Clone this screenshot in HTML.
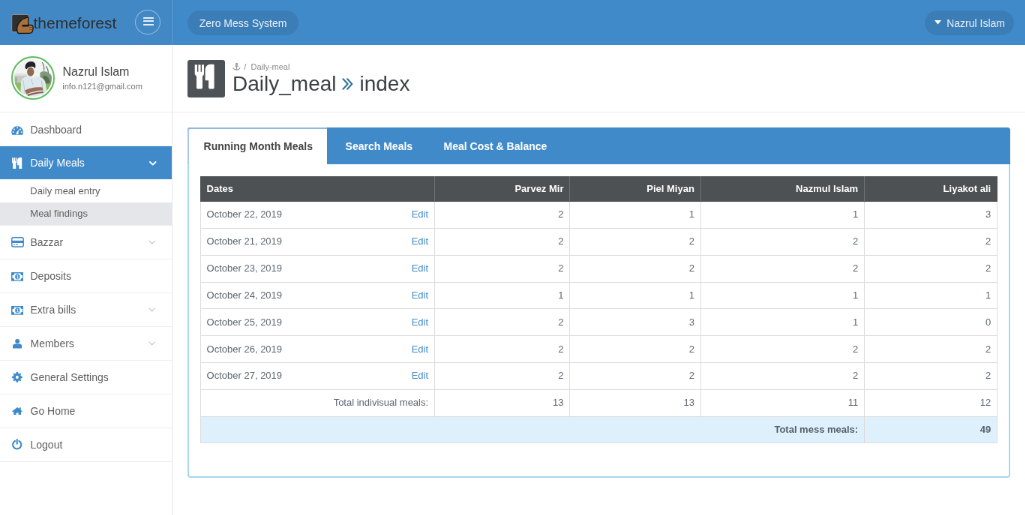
<!DOCTYPE html>
<html>
<head>
<meta charset="utf-8">
<style>
html,body{margin:0;padding:0;width:1025px;height:515px;overflow:hidden;background:#fff;}
*{box-sizing:border-box;}
#root{position:absolute;left:0;top:0;width:1366.67px;height:686.67px;transform:scale(0.75);transform-origin:0 0;will-change:transform;font-family:"Liberation Sans",sans-serif;color:#555;background:#fff;}
.abs{position:absolute;}
/* header */
#hdr{position:absolute;left:0;top:0;width:1366.67px;height:60px;background:#418aca;}
#logo{position:absolute;left:0;top:0;width:230px;height:60px;background:#4288c5;border-right:1.3px solid #5a9bd2;}
#logobox{position:absolute;left:15px;top:20px;width:24px;height:24px;background:#2a2a2a;border-radius:2px;border:1px solid #777;}
#logotext{position:absolute;left:44.5px;top:16.2px;font-size:21px;color:#2e2e2e;letter-spacing:0px;line-height:30px;}
#burger{position:absolute;left:180.3px;top:12.5px;width:34px;height:33px;border-radius:50%;border:1px solid rgba(255,255,255,0.45);}
#burger i{position:absolute;left:9.6px;width:14.5px;height:2.4px;background:#e6eef7;border-radius:0.5px;}
.pill{position:absolute;top:13.5px;height:33px;border-radius:17px;background:rgba(0,0,0,0.09);color:#e9f0f8;font-size:14px;line-height:33px;white-space:nowrap;}
/* sidebar */
#side{position:absolute;left:0;top:60px;width:230px;height:627px;border-right:1px solid #e6e6e6;}
#user{position:absolute;left:0;top:0;width:229px;height:90px;border-bottom:1px solid #ececec;}
#avatar{position:absolute;left:14.7px;top:14.7px;width:58.6px;height:58.6px;border-radius:50%;border:2px solid #5cbd5c;padding:2px;background:#fff;}
#avatar .ph{width:100%;height:100%;border-radius:50%;overflow:hidden;position:relative;background:#f4f6f6;}
#uname{position:absolute;left:83.5px;top:26px;font-size:16px;color:#444;line-height:20px;white-space:nowrap;}
#umail{position:absolute;left:83.3px;top:48px;font-size:11px;color:#727272;line-height:14px;white-space:nowrap;}
.mi{position:absolute;left:0;width:229px;height:45px;border-bottom:1px solid #eeeeee;font-size:14px;color:#5f5f5f;line-height:44px;}
.mi .t{position:absolute;left:40.5px;top:0;white-space:nowrap;}
.mi svg.ic{position:absolute;left:14.5px;top:14px;}
.mi .chev{position:absolute;left:198px;top:18px;}
.sub{position:absolute;left:0;width:229px;height:31px;font-size:13px;color:#5f5f5f;line-height:31px;}
.sub .t{position:absolute;left:40.3px;top:0;white-space:nowrap;}
/* content */
#ph{position:absolute;left:230px;top:60px;width:1136.67px;height:90px;border-bottom:1px solid #ececec;}
#phicon{position:absolute;left:20px;top:20px;width:50px;height:50px;background:#4d5256;border-radius:3px;}
#bc{position:absolute;left:80px;top:22px;font-size:11px;color:#888;white-space:nowrap;line-height:14px;}
#title2{position:absolute;left:249.5px;top:35px;font-size:28px;color:#3d4043;white-space:nowrap;line-height:34px;}
#title{position:absolute;left:80px;top:35px;font-size:28px;color:#3d4043;white-space:nowrap;line-height:34px;}
#title .rq{color:#2a7ab3;}
#box{position:absolute;left:249.6px;top:169.6px;width:1097.2px;height:467.4px;border:2px solid #a4d9ea;border-radius:4px;}
#tabbar{position:absolute;left:-2px;top:-2px;width:1097.2px;height:49.3px;background:#418aca;border-radius:4px 4px 0 0;border-top:1px solid #3b82c2;}
#tabact{position:absolute;left:0;top:-1px;width:186.4px;height:49.3px;background:#fff;border-radius:4px 0 0 0;border-top:2px solid #8fb6de;border-left:2px solid #a9c4e4;}
.tab{position:absolute;top:0px;font-size:14px;font-weight:bold;line-height:48px;white-space:nowrap;color:#fff;}
table{position:absolute;left:15px;top:63px;border-collapse:collapse;font-size:13px;color:#5b6670;}
td,th{border:1px solid #dcdcdc;padding:0 8px;height:35.9px;white-space:nowrap;}
td{padding-bottom:1.5px;}
th{background:#4d5154;color:#fff;font-weight:bold;height:33.3px;border-color:#4d5154;border-left-color:#6e7275;border-right-color:#6e7275;}
th:first-child{border-left-color:#4d5154;}
th:last-child{border-right-color:#4d5154;}
.r{text-align:right;}
a{color:#428bca;text-decoration:none;}
tr.tot td{background:#dff0fd;font-weight:bold;color:#56606a;border-color:#dcdcdc;height:35.3px;}
</style>
</head>
<body>
<div id="root">
  <div id="hdr">
    <div id="logo">
      <svg class="abs" style="left:15px;top:18px" width="32" height="28" viewBox="0 0 32 28">
        <rect x="0.7" y="1.4" width="22.4" height="23.2" rx="2" fill="#2f2f2f" stroke="#8e969c" stroke-width="1"/>
        <path transform="translate(0,0.8)" d="M21.8 4 C14 6 8 12 7.7 19.2 C7.6 22 8 24.5 9.5 25.7 L24.6 25.6 C27.5 25.4 29.2 22 29.2 18 C29.2 15.5 28 14.6 26.5 14.6 L15.5 14.8 C14.6 14.9 14.6 16 15.5 16.1 L22.8 16.1 L22.8 4.3 Z" fill="#a8713c" stroke="#161310" stroke-width="1.3" stroke-linejoin="round"/>
        <path d="M24 18.5 H28.6 M24 21.5 H28.4" stroke="#5a3d22" stroke-width="0.6"/>
      </svg>
      <div id="logotext">themeforest</div>
      <div id="burger"><i style="top:9.4px"></i><i style="top:13.6px"></i><i style="top:18.6px"></i></div>
    </div>
    <div class="pill" style="left:249.7px;width:148px;padding-left:16px;line-height:34px;">Zero Mess System</div>
    <div class="pill" style="left:1233px;width:119px;padding-left:29.2px;line-height:35.6px;">Nazrul Islam
      <svg class="abs" style="left:12.5px;top:13.7px" width="9" height="5.6" viewBox="0 0 10 6"><path d="M0 0H10L5 6Z" fill="#fff"/></svg>
    </div>
  </div>

  <div id="side">
    <div id="user">
      <div id="avatar"><div style="width:50.6px;height:50.6px;border-radius:50%;overflow:hidden"><svg width="50.6" height="50.6" viewBox="0 0 50 50" style="display:block">
                <g>
          <rect width="50" height="50" fill="#f1f3f3"/>
          <rect x="0" y="19" width="17" height="14" fill="#c6c9c2"/>
          <rect x="0" y="19" width="17" height="2.5" fill="#e2e4e0"/>
          <rect x="1" y="24" width="3" height="8" fill="#a9ada6"/>
          <path d="M34 18 C38 14 44 16 50 22 V36 H34 Z" fill="#7f9a7a"/>
          <path d="M38 22 C42 20 46 24 47 30 L45 34 H38 Z" fill="#55704f"/>
          <path d="M37 4 C39 8 40 11 39 15 M42 9 C44 12 45 15 45 19" stroke="#6a6a6a" stroke-width="1.1" fill="none"/>
          <rect x="0" y="31" width="12" height="19" fill="#8cbc5c"/>
          <rect x="36" y="32" width="14" height="18" fill="#86b85a"/>
          <path d="M8 50 L9 30 C10 25 14 23 18 22 L21 24 L26 24 L29 22 C34 23 39 25 41 30 L44 50 Z" fill="#dde8ee"/>
          <path d="M12 28 L14 45 M36 28 L38 44 M22 26 L25 34" stroke="#b8c6cf" stroke-width="1" fill="none"/>
          <path d="M14 41 C20 38 28 36 37 37 L38 41 C30 41 23 43 16 46 Z" fill="#9a6a52"/>
          <path d="M17 46.5 C23 44.5 30 43 38 42.5 L38.5 44.5 C31 45 24 46.5 18 48.5 Z" fill="#8a5c46"/>
          <ellipse cx="21.5" cy="16.5" rx="4.6" ry="6" fill="#8f684f"/>
          <path d="M14.5 12 C13.5 5 19 2.5 23 3 C27.5 3.5 29 7 27.5 12 L26.5 11 C24 9 19 9 16.5 13 Z" fill="#1f2029"/>
        </g></svg></div></div>
      <div id="uname">Nazrul Islam</div>
      <div id="umail">info.n121@gmail.com</div>
    </div>
    <div class="mi" style="top:90px;"><span class="t" style="top:1.3px">Dashboard</span></div>
    <div class="mi" style="top:135px;height:44px;border:0;background:#418aca;color:#fff;"><span class="t">Daily Meals</span></div>
    <div class="sub" style="top:179px;"><span class="t">Daily meal entry</span></div>
    <div class="sub" style="top:210px;background:#e4e6e9;"><span class="t" style="top:-1.3px">Meal findings</span></div>
    <div class="abs" style="left:0;top:240px;width:229px;height:1px;background:#eee"></div>
    <div class="mi" style="top:241px;"><span class="t">Bazzar</span></div>
    <div class="mi" style="top:286px;"><span class="t">Deposits</span></div>
    <div class="mi" style="top:331px;"><span class="t">Extra bills</span></div>
    <div class="mi" style="top:376px;"><span class="t">Members</span></div>
    <div class="mi" style="top:421px;"><span class="t">General Settings</span></div>
    <div class="mi" style="top:466px;"><span class="t">Go Home</span></div>
    <div class="mi" style="top:511px;"><span class="t">Logout</span></div>
  </div>
  <!-- sidebar icons (root coords) -->
  <svg class="abs" style="left:14.8px;top:168.3px" width="16.3" height="12" viewBox="0 0 16 12">
    <path d="M8 0.3 A7.8 7.8 0 0 0 0.2 8.1 C0.2 9.6 0.6 10.9 1.2 11.8 L14.8 11.8 C15.4 10.9 15.8 9.6 15.8 8.1 A7.8 7.8 0 0 0 8 0.3 Z" fill="#3d8acb"/>
    <g fill="#fff"><rect x="7.1" y="1.6" width="1.8" height="1.6"/><rect x="3.1" y="3.6" width="1.6" height="1.8"/><rect x="1.6" y="7.4" width="1.8" height="1.6"/><rect x="12.6" y="7.4" width="1.8" height="1.6"/><rect x="11.3" y="3.6" width="1.6" height="1.8"/>
    <path d="M11 3.6 L9.2 8.6 A1.6 1.6 0 1 1 7 8.4 Z"/></g>
  </svg>
  <svg class="abs" style="left:16.4px;top:209.5px" width="13.2" height="15.8" viewBox="9.7 5.7 25.9 32.9" preserveAspectRatio="none" fill="#fff">
      <path d="M9.7 6.3 H13 V15.7 H14.4 V6.3 H17.6 V15.7 H19 V6.3 H22 V18 C22 19.8 21 20.8 20 21.4 V36.8 C20 37.9 19.2 38.6 18 38.6 H14 C12.8 38.6 12 37.9 12 36.8 V21.4 C11 20.8 9.7 19.8 9.7 18 Z"/>
      <path d="M34.2 5.7 C35 5.7 35.6 6.3 35.6 7 V36.8 C35.6 37.9 34.8 38.6 33.6 38.6 H30.1 C28.9 38.6 28.1 37.9 28.1 36.8 V27.3 H23.6 V13 C23.6 9 26.5 5.7 30.5 5.7 Z"/>
  </svg>
  <svg class="abs" style="left:199px;top:214.5px" width="9.5" height="6" viewBox="0 0 9.5 6"><path d="M1 1 L4.75 4.6 L8.5 1" stroke="#fff" stroke-width="1.9" fill="none" stroke-linecap="round" stroke-linejoin="round"/></svg>
  <svg class="abs" style="left:14.5px;top:316px" width="17" height="13.7" viewBox="0 0 17 13.7">
    <rect x="0.8" y="0.8" width="15.4" height="12.1" rx="2" fill="none" stroke="#3d8acb" stroke-width="1.5"/>
    <rect x="1" y="4.8" width="15" height="3.2" fill="#3d8acb"/>
    <rect x="3" y="9.6" width="2" height="1" fill="#3d8acb"/><rect x="5.8" y="9.6" width="3.2" height="1" fill="#3d8acb"/>
  </svg>
  <svg class="abs" style="left:197.6px;top:320px" width="9.4" height="6.2" viewBox="0 0 9 6"><path d="M0.8 0.8 L4.5 4.8 L8.2 0.8" stroke="#c4c4c4" stroke-width="1.1" fill="none"/></svg>
  <svg class="abs" style="left:14.5px;top:363px" width="16.6" height="11.8" viewBox="0 0 16.6 11.8">
    <path fill="#3d8acb" fill-rule="evenodd" d="M0 0 H16.6 V11.8 H0 Z M4.2 1.4 H12.4 A2.7 2.7 0 0 0 15.1 4.1 V7.7 A2.7 2.7 0 0 0 12.4 10.4 H4.2 A2.7 2.7 0 0 0 1.5 7.7 V4.1 A2.7 2.7 0 0 0 4.2 1.4 Z"/>
    <ellipse cx="8.3" cy="5.9" rx="3.1" ry="3.6" fill="#3d8acb"/>
    <path d="M7.3 4.4 L8.6 3.9 V7.9 M7.2 7.9 H9.9" stroke="#fff" stroke-width="0.9" fill="none"/>
  </svg>
  <svg class="abs" style="left:14.5px;top:408px" width="16.6" height="11.8" viewBox="0 0 16.6 11.8">
    <path fill="#3d8acb" fill-rule="evenodd" d="M0 0 H16.6 V11.8 H0 Z M4.2 1.4 H12.4 A2.7 2.7 0 0 0 15.1 4.1 V7.7 A2.7 2.7 0 0 0 12.4 10.4 H4.2 A2.7 2.7 0 0 0 1.5 7.7 V4.1 A2.7 2.7 0 0 0 4.2 1.4 Z"/>
    <ellipse cx="8.3" cy="5.9" rx="3.1" ry="3.6" fill="#3d8acb"/>
    <path d="M7.3 4.4 L8.6 3.9 V7.9 M7.2 7.9 H9.9" stroke="#fff" stroke-width="0.9" fill="none"/>
  </svg>
  <svg class="abs" style="left:197.6px;top:410px" width="9.4" height="6.2" viewBox="0 0 9 6"><path d="M0.8 0.8 L4.5 4.8 L8.2 0.8" stroke="#c4c4c4" stroke-width="1.1" fill="none"/></svg>
  <svg class="abs" style="left:16.9px;top:452.3px" width="12.4" height="12.4" viewBox="0 0 12.4 12.4" fill="#3d8acb">
    <circle cx="6.2" cy="3" r="3"/>
    <path d="M0 12.4 V9.8 C0 7.8 1.6 6.6 3.6 6.6 H8.8 C10.8 6.6 12.4 7.8 12.4 9.8 V12.4 Z"/>
  </svg>
  <svg class="abs" style="left:197.6px;top:455px" width="9.4" height="6.2" viewBox="0 0 9 6"><path d="M0.8 0.8 L4.5 4.8 L8.2 0.8" stroke="#c4c4c4" stroke-width="1.1" fill="none"/></svg>
  <svg class="abs" style="left:15.8px;top:496px" width="13.8" height="13.8" viewBox="-7 -7 14 14" fill="#3d8acb">
    <path fill-rule="evenodd" d="M-1.2 -6.9 H1.2 L1.5 -5 L2.9 -4.4 L4.5 -5.6 L5.6 -4.5 L4.4 -2.9 L5 -1.5 L6.9 -1.2 V1.2 L5 1.5 L4.4 2.9 L5.6 4.5 L4.5 5.6 L2.9 4.4 L1.5 5 L1.2 6.9 H-1.2 L-1.5 5 L-2.9 4.4 L-4.5 5.6 L-5.6 4.5 L-4.4 2.9 L-5 1.5 L-6.9 1.2 V-1.2 L-5 -1.5 L-4.4 -2.9 L-5.6 -4.5 L-4.5 -5.6 L-2.9 -4.4 L-1.5 -5 Z M0 -2.2 A2 2.2 0 1 0 0 2.2 A2 2.2 0 1 0 0 -2.2 Z"/>
  </svg>
  <svg class="abs" style="left:15.9px;top:542.7px" width="14.2" height="10.8" viewBox="0 0 14.2 10.8" fill="#3d8acb">
    <path d="M7.1 0 L14.2 5.6 L13.3 6.6 L12 5.6 V10.8 H8.6 V7.6 H5.6 V10.8 H2.2 V5.6 L0.9 6.6 L0 5.6 Z"/>
    <rect x="9.6" y="0.4" width="2.2" height="3.2"/>
  </svg>
  <svg class="abs" style="left:16.3px;top:585.3px" width="13.4" height="14.3" viewBox="0 0 13.4 14.3">
    <path d="M4 3 A5.6 5.6 0 1 0 9.4 3" stroke="#3d8acb" stroke-width="2.1" fill="none" stroke-linecap="round"/>
    <path d="M6.7 1.1 V6.8" stroke="#3d8acb" stroke-width="2.1" stroke-linecap="round"/>
  </svg>

  <div id="ph">
    <div id="phicon"><svg width="50" height="50" viewBox="0 0 50 50" style="display:block" fill="#fff">
      <path d="M9.7 6.3 H13 V15.7 H14.4 V6.3 H17.6 V15.7 H19 V6.3 H22 V18 C22 19.8 21 20.8 20 21.4 V36.8 C20 37.9 19.2 38.6 18 38.6 H14 C12.8 38.6 12 37.9 12 36.8 V21.4 C11 20.8 9.7 19.8 9.7 18 Z"/>
      <path d="M34.2 5.7 C35 5.7 35.6 6.3 35.6 7 V36.8 C35.6 37.9 34.8 38.6 33.6 38.6 H30.1 C28.9 38.6 28.1 37.9 28.1 36.8 V27.3 H23.6 V13 C23.6 9 26.5 5.7 30.5 5.7 Z"/>
    </svg></div>
    <div id="bc">&nbsp;&nbsp;&nbsp;&nbsp; / &nbsp;Daily-meal</div>
    <svg class="abs" style="left:80.3px;top:24.3px" width="11" height="10" viewBox="0 0 11 10"><g stroke="#9a9a9a" stroke-width="1.3" fill="none"><circle cx="5.5" cy="1.5" r="1.1"/><path d="M5.5 2.6 V9 M3.2 4.2 H7.8 M1 6.2 C1.5 8.2 3.3 9.2 5.5 9.2 C7.7 9.2 9.5 8.2 10 6.2"/></g></svg>
    <div id="title">Daily_meal</div><div id="title2">index</div>
    <svg class="abs" style="left:226.4px;top:43.9px" width="16.2" height="16" viewBox="0 0 16 16"><path d="M1.4 1.3 L7.6 8 L1.4 14.7 M7 1.3 L13.2 8 L7 14.7" stroke="#2d709a" stroke-width="2.0" fill="none" stroke-linecap="round" stroke-linejoin="round"/></svg>
  </div>

  <div id="box">
    <div id="tabbar">
      <div id="tabact"></div>
      <div class="tab" style="left:22px;color:#444;">Running Month Meals</div>
      <div class="tab" style="left:211px;">Search Meals</div>
      <div class="tab" style="left:342px;">Meal Cost &amp; Balance</div>
    </div>
    <table>
      <colgroup><col style="width:312.5px"><col style="width:180.4px"><col style="width:174.4px"><col style="width:218.3px"><col style="width:177px"></colgroup>
      <tr><th style="text-align:left">Dates</th><th class="r">Parvez Mir</th><th class="r">Piel Miyan</th><th class="r">Nazmul Islam</th><th class="r">Liyakot ali</th></tr>
      <tr><td>October 22, 2019<a style="float:right">Edit</a></td><td class="r">2</td><td class="r">1</td><td class="r">1</td><td class="r">3</td></tr>
      <tr><td>October 21, 2019<a style="float:right">Edit</a></td><td class="r">2</td><td class="r">2</td><td class="r">2</td><td class="r">2</td></tr>
      <tr><td>October 23, 2019<a style="float:right">Edit</a></td><td class="r">2</td><td class="r">2</td><td class="r">2</td><td class="r">2</td></tr>
      <tr><td>October 24, 2019<a style="float:right">Edit</a></td><td class="r">1</td><td class="r">1</td><td class="r">1</td><td class="r">1</td></tr>
      <tr><td>October 25, 2019<a style="float:right">Edit</a></td><td class="r">2</td><td class="r">3</td><td class="r">1</td><td class="r">0</td></tr>
      <tr><td>October 26, 2019<a style="float:right">Edit</a></td><td class="r">2</td><td class="r">2</td><td class="r">2</td><td class="r">2</td></tr>
      <tr><td>October 27, 2019<a style="float:right">Edit</a></td><td class="r">2</td><td class="r">2</td><td class="r">2</td><td class="r">2</td></tr>
      <tr><td class="r">Total indivisual meals:</td><td class="r">13</td><td class="r">13</td><td class="r">11</td><td class="r">12</td></tr>
      <tr class="tot"><td class="r" colspan="4">Total mess meals:</td><td class="r">49</td></tr>
    </table>
  </div>
</div>
</body>
</html>
